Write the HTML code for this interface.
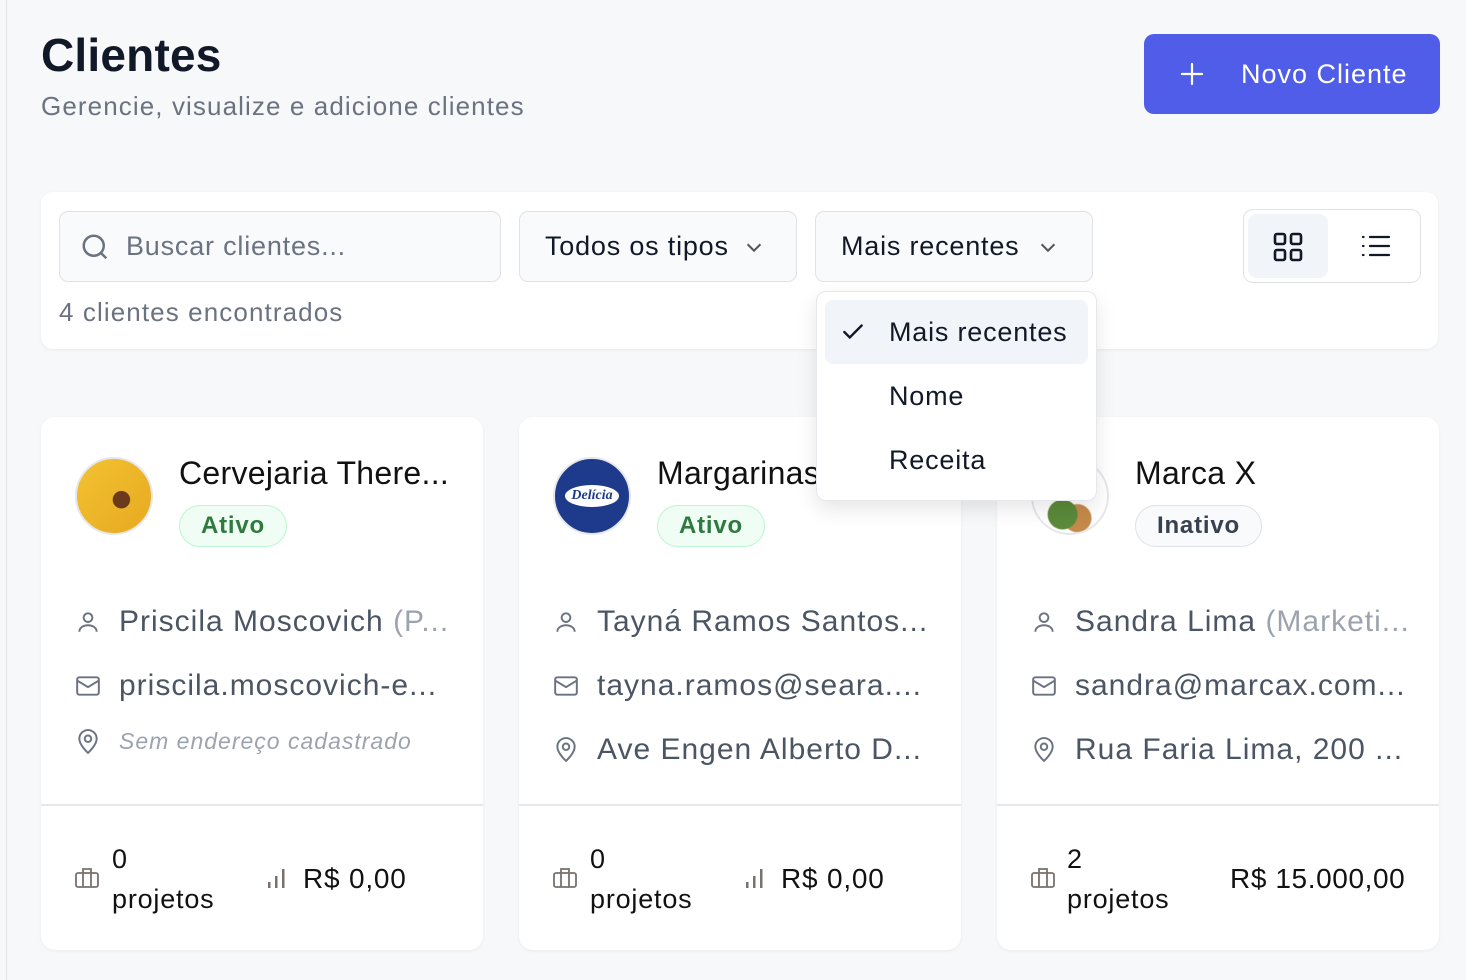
<!DOCTYPE html>
<html><head><meta charset="utf-8"><style>
*{box-sizing:border-box;margin:0;padding:0}
body{width:1466px;height:980px;overflow:hidden;background:#f7f8fa;font-family:"Liberation Sans",sans-serif;color:#111827;position:relative;letter-spacing:0.8px}
.abs{position:absolute}
.vline{left:6px;top:0;width:1px;height:980px;background:#e1e3e8}
h1{position:absolute;left:41px;top:28px;font-size:46px;font-weight:700;color:#111827;letter-spacing:0.2px}
.sub{left:41px;top:91px;font-size:26px;color:#6b7280;letter-spacing:1.1px}
.btn{left:1144px;top:34px;width:296px;height:80px;background:#4f5de8;border-radius:10px;color:#fff;font-size:27px;display:flex;align-items:center;letter-spacing:1px}
.panel{left:41px;top:192px;width:1397px;height:157px;background:#fff;border-radius:12px;box-shadow:0 1px 3px rgba(0,0,0,.06)}
.inp{height:71px;border:1.5px solid #dfe2e7;border-radius:9px;background:#f9fafb;display:flex;align-items:center;font-size:27px}
.card{top:417px;width:442px;height:533px;background:#fff;border-radius:14px;box-shadow:0 1px 3px rgba(0,0,0,.06)}
.card .div{position:absolute;left:0;right:0;top:387px;height:2px;background:#e5e7eb}
.name{position:absolute;left:138px;top:38px;font-size:32px;color:#111;letter-spacing:0.3px}
.badge{position:absolute;left:138px;top:88px;height:42px;border-radius:21px;font-size:24px;font-weight:700;display:flex;align-items:center;padding:0 21px}
.ok{background:#f0fdf4;border:1.5px solid #bbf7d0;color:#2f7a3f}
.off{background:#f9fafb;border:1.5px solid #dfe2e7;color:#374151}
.av{position:absolute;left:34px;top:40px;width:78px;height:78px;border-radius:50%}
.row{position:absolute;left:34px;display:flex;align-items:center;font-size:30px;color:#4b5563;white-space:nowrap;letter-spacing:1px}
.row svg{margin-right:18px}
.lt{color:#9ca3af}
.foot{position:absolute;top:425px;left:34px;font-size:27px;color:#111}
</style></head><body>
<div class="abs vline"></div>
<h1>Clientes</h1>
<div class="abs sub">Gerencie, visualize e adicione clientes</div>
<div class="abs btn"><svg style="margin-left:36px" width="24" height="24" viewBox="0 0 24 24" fill="none" stroke="#fff" stroke-width="2.2" stroke-linecap="round"><path d="M12 2v20M2 12h20"/></svg><span style="margin-left:37px">Novo Cliente</span></div>

<div class="abs panel"></div>
<div class="abs inp" style="left:59px;top:211px;width:442px;color:#6b7280"><svg style="margin:0 16px 0 20px" width="30" height="30" viewBox="0 0 24 24" fill="none" stroke="#6b7280" stroke-width="2"><circle cx="11" cy="11" r="8"/><path d="M21 21l-4.3-4.3"/></svg>Buscar clientes...</div>
<div class="abs inp" style="left:519px;top:211px;width:278px;padding-left:25px">Todos os tipos<svg style="margin-left:14px" width="22" height="22" viewBox="0 0 24 24" fill="none" stroke="#555" stroke-width="2.2"><path d="M5 9l7 7 7-7"/></svg></div>
<div class="abs inp" style="left:815px;top:211px;width:278px;padding-left:25px">Mais recentes<svg style="margin-left:18px" width="22" height="22" viewBox="0 0 24 24" fill="none" stroke="#555" stroke-width="2.2"><path d="M5 9l7 7 7-7"/></svg></div>
<div class="abs" style="left:1243px;top:209px;width:178px;height:74px;border:1.5px solid #dfe2e7;border-radius:10px;background:#fff"></div>
<div class="abs" style="left:1248px;top:214px;width:80px;height:64px;border-radius:9px;background:#f1f4f8"></div>
<svg class="abs" style="left:1273px;top:232px" width="30" height="30" viewBox="0 0 30 30" fill="none" stroke="#111827" stroke-width="2.6"><rect x="2" y="2" width="10" height="10" rx="2"/><rect x="18" y="2" width="10" height="10" rx="2"/><rect x="2" y="18" width="10" height="10" rx="2"/><rect x="18" y="18" width="10" height="10" rx="2"/></svg>
<svg class="abs" style="left:1361px;top:235px" width="30" height="22" viewBox="0 0 30 22" fill="none" stroke="#111827" stroke-width="2.2" stroke-linecap="round"><path d="M2 2h.5M2 11h.5M2 20h.5M9 2h19M9 11h19M9 20h19"/></svg>
<div class="abs" style="left:59px;top:297px;font-size:26px;color:#6b7280;letter-spacing:1.1px">4 clientes encontrados</div>

<!-- card 1 -->
<div class="abs card" style="left:41px">
<div class="av" style="background:radial-gradient(circle at 60% 55%,#6b3a1a 0 14%,transparent 15%),linear-gradient(135deg,#f2c232,#e8a920);border:2px solid #e5e7eb"></div>
<div class="name">Cervejaria There...</div>
<div class="badge ok">Ativo</div>
<div class="row" style="top:188px"><svg width="26" height="26" viewBox="0 0 24 24" fill="none" stroke="#6b7280" stroke-width="1.8"><circle cx="12" cy="8" r="4"/><path d="M4 21c0-4 4-6 8-6s8 2 8 6"/></svg>Priscila Moscovich <span class="lt">&nbsp;(P...</span></div>
<div class="row" style="top:252px"><svg width="26" height="26" viewBox="0 0 24 24" fill="none" stroke="#6b7280" stroke-width="1.8"><rect x="2" y="4" width="20" height="16" rx="2"/><path d="M2 7l10 6 10-6"/></svg>priscila.moscovich-e...</div>
<div class="row" style="top:311px;font-size:23px;font-style:italic;color:#9ca3af"><svg width="26" height="26" viewBox="0 0 24 24" fill="none" stroke="#6b7280" stroke-width="1.8"><path d="M12 22s8-7 8-13a8 8 0 0 0-16 0c0 6 8 13 8 13z"/><circle cx="12" cy="9" r="3"/></svg>Sem endereço cadastrado</div>
<div class="div"></div>
<svg class="abs" style="left:34px;top:450px" width="24" height="22" viewBox="0 0 24 22" fill="none" stroke="#78716c" stroke-width="1.8"><rect x="1" y="6" width="22" height="14" rx="2"/><path d="M8 6V2h8v4M8 6v14M16 6v14"/></svg>
<div class="foot" style="left:71px;top:422px;line-height:40px">0<br>projetos</div>
<svg class="abs" style="left:226px;top:450px" width="20" height="22" viewBox="0 0 20 22" fill="#78716c"><rect x="1" y="15" width="2.5" height="6"/><rect x="8" y="9" width="2.5" height="12"/><rect x="15" y="2" width="2.5" height="19"/></svg>
<div class="foot" style="left:262px;top:446px;font-size:28px">R$ 0,00</div>
</div>

<!-- card 2 -->
<div class="abs card" style="left:519px">
<div class="av" style="background:#1e3a8a;border:2px solid #e5e7eb;display:flex;align-items:center;justify-content:center"><div style="background:#fff;color:#1e3a8a;font-size:14px;font-style:italic;font-weight:700;border-radius:50%;padding:3px 6px;font-family:'Liberation Serif',serif;letter-spacing:0">Delícia</div></div>
<div class="name">Margarinas</div>
<div class="badge ok">Ativo</div>
<div class="row" style="top:188px"><svg width="26" height="26" viewBox="0 0 24 24" fill="none" stroke="#6b7280" stroke-width="1.8"><circle cx="12" cy="8" r="4"/><path d="M4 21c0-4 4-6 8-6s8 2 8 6"/></svg>Tayná Ramos Santos...</div>
<div class="row" style="top:252px"><svg width="26" height="26" viewBox="0 0 24 24" fill="none" stroke="#6b7280" stroke-width="1.8"><rect x="2" y="4" width="20" height="16" rx="2"/><path d="M2 7l10 6 10-6"/></svg>tayna.ramos@seara....</div>
<div class="row" style="top:316px"><svg width="26" height="26" viewBox="0 0 24 24" fill="none" stroke="#6b7280" stroke-width="1.8"><path d="M12 22s8-7 8-13a8 8 0 0 0-16 0c0 6 8 13 8 13z"/><circle cx="12" cy="9" r="3"/></svg>Ave Engen Alberto D...</div>
<div class="div"></div>
<svg class="abs" style="left:34px;top:450px" width="24" height="22" viewBox="0 0 24 22" fill="none" stroke="#78716c" stroke-width="1.8"><rect x="1" y="6" width="22" height="14" rx="2"/><path d="M8 6V2h8v4M8 6v14M16 6v14"/></svg>
<div class="foot" style="left:71px;top:422px;line-height:40px">0<br>projetos</div>
<svg class="abs" style="left:226px;top:450px" width="20" height="22" viewBox="0 0 20 22" fill="#78716c"><rect x="1" y="15" width="2.5" height="6"/><rect x="8" y="9" width="2.5" height="12"/><rect x="15" y="2" width="2.5" height="19"/></svg>
<div class="foot" style="left:262px;top:446px;font-size:28px">R$ 0,00</div>
</div>

<!-- card 3 -->
<div class="abs card" style="left:997px">
<div class="av" style="background:radial-gradient(circle at 40% 75%,#5b8a3a 0 20%,transparent 22%),radial-gradient(circle at 60% 80%,#c58a4a 0 18%,#fff 20%);border:2px solid #e5e7eb"></div>
<div class="name">Marca X</div>
<div class="badge off">Inativo</div>
<div class="row" style="top:188px"><svg width="26" height="26" viewBox="0 0 24 24" fill="none" stroke="#6b7280" stroke-width="1.8"><circle cx="12" cy="8" r="4"/><path d="M4 21c0-4 4-6 8-6s8 2 8 6"/></svg>Sandra Lima <span class="lt">&nbsp;(Marketi...</span></div>
<div class="row" style="top:252px"><svg width="26" height="26" viewBox="0 0 24 24" fill="none" stroke="#6b7280" stroke-width="1.8"><rect x="2" y="4" width="20" height="16" rx="2"/><path d="M2 7l10 6 10-6"/></svg>sandra@marcax.com...</div>
<div class="row" style="top:316px"><svg width="26" height="26" viewBox="0 0 24 24" fill="none" stroke="#6b7280" stroke-width="1.8"><path d="M12 22s8-7 8-13a8 8 0 0 0-16 0c0 6 8 13 8 13z"/><circle cx="12" cy="9" r="3"/></svg>Rua Faria Lima, 200 ...</div>
<div class="div"></div>
<svg class="abs" style="left:34px;top:450px" width="24" height="22" viewBox="0 0 24 22" fill="none" stroke="#78716c" stroke-width="1.8"><rect x="1" y="6" width="22" height="14" rx="2"/><path d="M8 6V2h8v4M8 6v14M16 6v14"/></svg>
<div class="foot" style="left:70px;top:422px;line-height:40px">2<br>projetos</div>
<div class="foot" style="left:233px;top:446px;font-size:28px;letter-spacing:0.6px">R$ 15.000,00</div>
</div>

<!-- dropdown -->
<div class="abs" style="left:816px;top:291px;width:281px;height:210px;background:#fff;border:1.5px solid #e5e7eb;border-radius:10px;box-shadow:0 8px 20px rgba(0,0,0,.1)"></div>
<div class="abs" style="left:825px;top:300px;width:263px;height:64px;background:#f1f4f8;border-radius:8px"></div>
<svg class="abs" style="left:840px;top:319px" width="26" height="26" viewBox="0 0 24 24" fill="none" stroke="#111827" stroke-width="2.2" stroke-linecap="round"><path d="M4 12l5 5L20 6"/></svg>
<div class="abs" style="left:889px;top:317px;font-size:27px">Mais recentes</div>
<div class="abs" style="left:889px;top:381px;font-size:27px">Nome</div>
<div class="abs" style="left:889px;top:445px;font-size:27px">Receita</div>
</body></html>
